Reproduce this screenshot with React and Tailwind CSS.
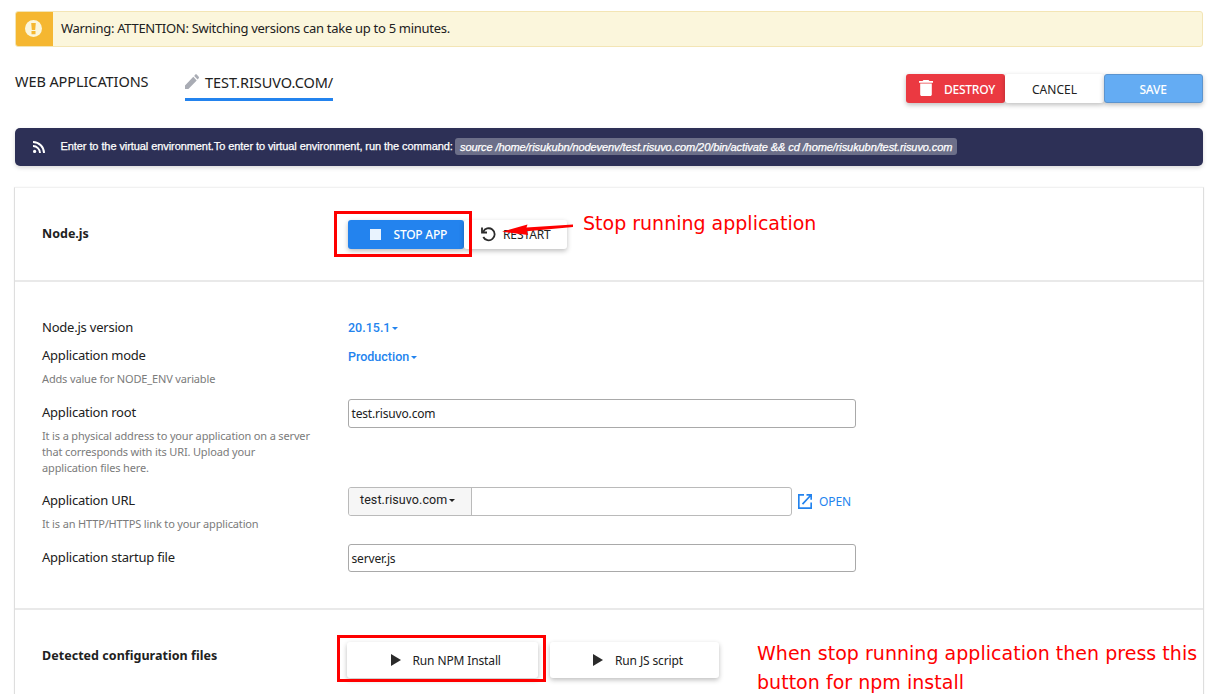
const noto = "font-['Noto_Sans',sans-serif]";

const raised = "shadow-[0_2px_5px_rgba(0,0,0,0.26)]";

function Row({ height, label, hint, children }) {
  return (
    <div className={`grid grid-cols-[306px_1fr] items-start ${height}`}>
      <div>
        <div className="flex h-[27px] items-center text-[13px] tracking-[-0.22px]">{label}</div>
        {hint && <div className="mt-[2px] text-[11px] leading-[16px] tracking-[-0.15px] text-[#7b7b7b]">{hint}</div>}
      </div>
      {children}
    </div>
  );
}

function Caret() {
  return <span className="mt-[1px] ml-[2px] h-0 w-0 border-x-[3.500px] border-t-[3px] border-x-transparent border-t-current" />;
}

function PlayIcon() {
  return (
    <svg width="11" height="12" viewBox="0 0 11 12" fill="#2b2b2b"><path d="M0 0 10 6 0 12z" /></svg>
  );
}

export default function App() {
  return (
    <div className={`relative h-[694px] w-[1212px] overflow-hidden bg-white pt-[11px] pr-[9px] pl-[15px] text-[#212121] ${noto}`}>
      <div className="flex h-[36px] items-center overflow-hidden rounded-[3px] border border-[#f3e5b5] bg-[#fbf6dc]">
        <div className="flex h-full w-[37px] items-center justify-center bg-[#f5b731] pr-[2px] pb-[1px]">
          <svg width="17" height="17" viewBox="0 0 17 17">
            <circle cx="8.500" cy="8.500" r="8.500" fill="#fbf6dc" />
            <path d="M6.200 3h4.600l-.6 7H6.800zM6.500 11h4v3.200h-4z" fill="#f5b731" />
          </svg>
        </div>
        <span className="ml-[8px] text-[13px] tracking-[-0.29px] whitespace-nowrap">Warning: ATTENTION: Switching versions can take up to 5 minutes.</span>
      </div>

      <div className="mt-[17px] flex h-[39px] items-start">
        <span className="w-[170px] pt-[6px] text-[14.500px] leading-[22px] tracking-[-0.08px] whitespace-nowrap">WEB APPLICATIONS</span>
        <div className="flex h-[37px] w-[148px] items-start border-b-[3px] border-[#2383ee] pt-[7px]">
          <svg className="mt-[3px] mr-[6px] shrink-0" width="14" height="15" viewBox="0 0 14 15" fill="#a9acb4">
            <path d="M0 11.400V15h3.400l8.300-8.600-3.400-3.600zM9.200 1.900l3.400 3.500 1.100-1.200c.4-.4.4-1 0-1.400L11.700.5c-.4-.5-1-.5-1.400 0z" />
          </svg>
          <span className="text-[14.500px] leading-[22px] tracking-[-0.04px] whitespace-nowrap">TEST.RISUVO.COM/</span>
        </div>
        <div className="mt-[10px] ml-auto flex h-[29px] text-[12px]">
          <button className={`flex w-[99px] items-center rounded-[3px] bg-[#eb3941] pl-[13px] font-medium text-white ${raised}`}>
            <svg className="mr-[11px] mb-[1px]" width="14" height="16" viewBox="0 0 14 16" fill="white"><path d="M4.500 0h5l1 1H14v1.800H0V1h3.500zM1.200 3.600h11.600v10.900c0 .8-.7 1.500-1.500 1.500H2.700c-.8 0-1.500-.7-1.500-1.500z" /></svg>
            <span className="pt-[2px] tracking-[-0.25px]">DESTROY</span>
          </button>
          <button className={`w-[99px] rounded-[3px] bg-white pt-[2px] ${raised}`}>CANCEL</button>
          <button className={`w-[99px] rounded-[3px] border border-[#5b94cf] bg-[#64acf3] pt-[2px] pr-[1px] font-medium tracking-[-0.2px] text-white ${raised}`}>SAVE</button>
        </div>
      </div>

      <div className="mt-[25px] flex h-[38px] items-center rounded-[5px] bg-[#2d3056] font-['Liberation_Sans',Arial,sans-serif] text-[11px] tracking-[-0.078px] whitespace-nowrap text-white shadow-[0_2px_4px_rgba(0,0,0,0.15)]">
        <svg className="mr-[15.500px] ml-[18px]" width="12" height="12" viewBox="0 0 12 12" fill="none" stroke="white" strokeWidth="1.900">
          <circle cx="1.600" cy="10.400" r="1.600" fill="white" stroke="none" />
          <path d="M0 1a11 11 0 0 1 11 11M0 5a7 7 0 0 1 7 7" />
        </svg>
        <span className="mb-[1px] w-[391.500px] [-webkit-text-stroke:0.25px_white]">Enter to the virtual environment.To enter to virtual environment, run the command:</span>
        <code className="mb-[1px] ml-[3px] flex h-[17px] w-[502px] items-center rounded-[3px] bg-[#6c6f89] pt-[1px] pl-[5px] font-['Liberation_Sans',Arial,sans-serif] text-[11px] tracking-[-0.085px] italic [-webkit-text-stroke:0.25px_white]">source /home/risukubn/nodevenv/test.risuvo.com/20/bin/activate &amp;&amp; cd /home/risukubn/test.risuvo.com</code>
      </div>

      <main className="mt-[21px] -ml-[1px] h-[530px] w-[1190px] border border-x-[#dedede] border-t-[#f1f1f1] shadow-[0_0_2px_rgba(0,0,0,0.05)]">
        <section className="grid h-[94px] grid-cols-[306px_1fr] border-b-2 border-[#e9e9e9] pl-[27px]">
          <h2 className="pt-[36px] text-[12.500px] leading-[20px] font-bold">Node.js</h2>
          <div className="mt-[32px] flex h-[29px] text-[12px]">
            <button className={`flex w-[116px] items-center rounded-[3px] bg-[#2383ee] pl-[22px] font-medium text-white ${raised}`}>
              <span className="mr-[12.500px] h-[11px] w-[11px] bg-[#e9f3fe]" />
              <span className="pt-[1px] tracking-[-0.22px]">STOP APP</span>
            </button>
            <button className={`flex w-[103px] items-center rounded-[3px] bg-white pl-[17px] ${raised}`}>
              <svg className="mr-[6px]" width="16" height="15" viewBox="0 0 16 15" fill="none" stroke="#2b2b2b" strokeWidth="1.800">
                <path d="M2.200 4.800A6 6 0 1 1 2.300 10" />
                <path d="M1 .5v5h5" />
              </svg>
              <span className="pt-[1px] tracking-[-0.1px]">RESTART</span>
            </button>
          </div>
        </section>

        <section className="h-[328px] border-b-2 border-[#e9e9e9] pt-[32px] pl-[27px]">
          <Row height="h-[28px]" label="Node.js version">
            <div className="flex h-[28px] items-center font-[Roboto,sans-serif] text-[12.500px] font-medium text-[#2383ee]">20.15.1<Caret /></div>
          </Row>
          <Row height="h-[57px]" label="Application mode" hint="Adds value for NODE_ENV variable">
            <div className="flex h-[30px] items-center font-[Roboto,sans-serif] text-[12.500px] font-medium text-[#2383ee]">Production<Caret /></div>
          </Row>
          <Row height="h-[88px]" label="Application root" hint={<>It is a physical address to your application on a server<br />that corresponds with its URI. Upload your<br />application files here.</>}>
            <div className="flex h-[29px] w-[508px] items-center rounded-[3px] border border-[#a9a9a9] pl-[2.500px] text-[12px] tracking-[-0.17px]">test.risuvo.com</div>
          </Row>
          <Row height="h-[57px]" label="Application URL" hint="It is an HTTP/HTTPS link to your application">
            <div className="flex h-[29px] items-center">
              <div className="flex h-[29px] w-[444px] rounded-[3px] border border-[#bababa]">
                <div className="flex w-[123px] items-center rounded-l-[2px] border-r border-[#bababa] bg-[#f6f6f6] pb-[3px] pl-[11px] font-[Roboto,sans-serif] text-[12.500px] tracking-[0.07px]">test.risuvo.com<Caret /></div>
              </div>
              <svg className="mr-[7px] ml-[6px]" width="14" height="15" viewBox="0 0 14 15" fill="none" stroke="#2383ee" strokeWidth="1.700">
                <path d="M6 .8H.8v13.400h12.400V8.500M8.500 .8h4.700v5M13 1 4.500 10.200" />
              </svg>
              <span className="text-[12px] tracking-[-0.1px] text-[#2383ee]">OPEN</span>
            </div>
          </Row>
          <Row height="h-[28px]" label="Application startup file">
            <div className="flex h-[28px] w-[508px] items-center rounded-[3px] border border-[#a9a9a9] pt-[2px] pl-[2.500px] text-[12px] tracking-[-0.17px]">server.js</div>
          </Row>
        </section>

        <section className="flex pl-[27px]">
          <h2 className="w-[306px] pt-[36px] text-[12.500px] leading-[20px] font-bold tracking-[0.04px]">Detected configuration files</h2>
          <div className="mt-[32px] -ml-[1px] flex h-[36px] gap-[12px] text-[12px] tracking-[-0.13px]">
            <button className={`flex w-[191px] items-center rounded-[3px] bg-white pl-[43.500px] ${raised}`}>
              <PlayIcon /><span className="ml-[11px] pt-[2px]">Run NPM Install</span>
            </button>
            <button className={`flex w-[169px] items-center rounded-[3px] bg-white pl-[43px] ${raised}`}>
              <PlayIcon /><span className="ml-[11px] pt-[2px]">Run JS script</span>
            </button>
          </div>
        </section>
      </main>

      <div className="absolute top-[211px] left-[334px] h-[46px] w-[138px] border-[3px] border-[#fe0000]" />
      <div className="absolute top-[635px] left-[337px] h-[47px] w-[209px] border-[3px] border-[#fe0000]" />
      <svg className="absolute top-[222px] left-[500px]" width="76" height="16" viewBox="0 0 76 16" fill="#fe0000">
        <path d="M2 9.700 27.500 2.500 26.500 5.600 73 2.500V5L27 9.200 28.200 13z" />
      </svg>
      <div className="absolute top-[211px] left-[583px] font-['DejaVu_Sans',Verdana,sans-serif] text-[19px] leading-[24px] whitespace-nowrap text-[#fe0000]">Stop running application</div>
      <div className="absolute top-[639px] left-[757px] font-['DejaVu_Sans',Verdana,sans-serif] text-[19px] leading-[29px] tracking-[0.03px] whitespace-nowrap text-[#fe0000]">When stop running application then press this<br />button for npm install</div>
    </div>
  );
}
